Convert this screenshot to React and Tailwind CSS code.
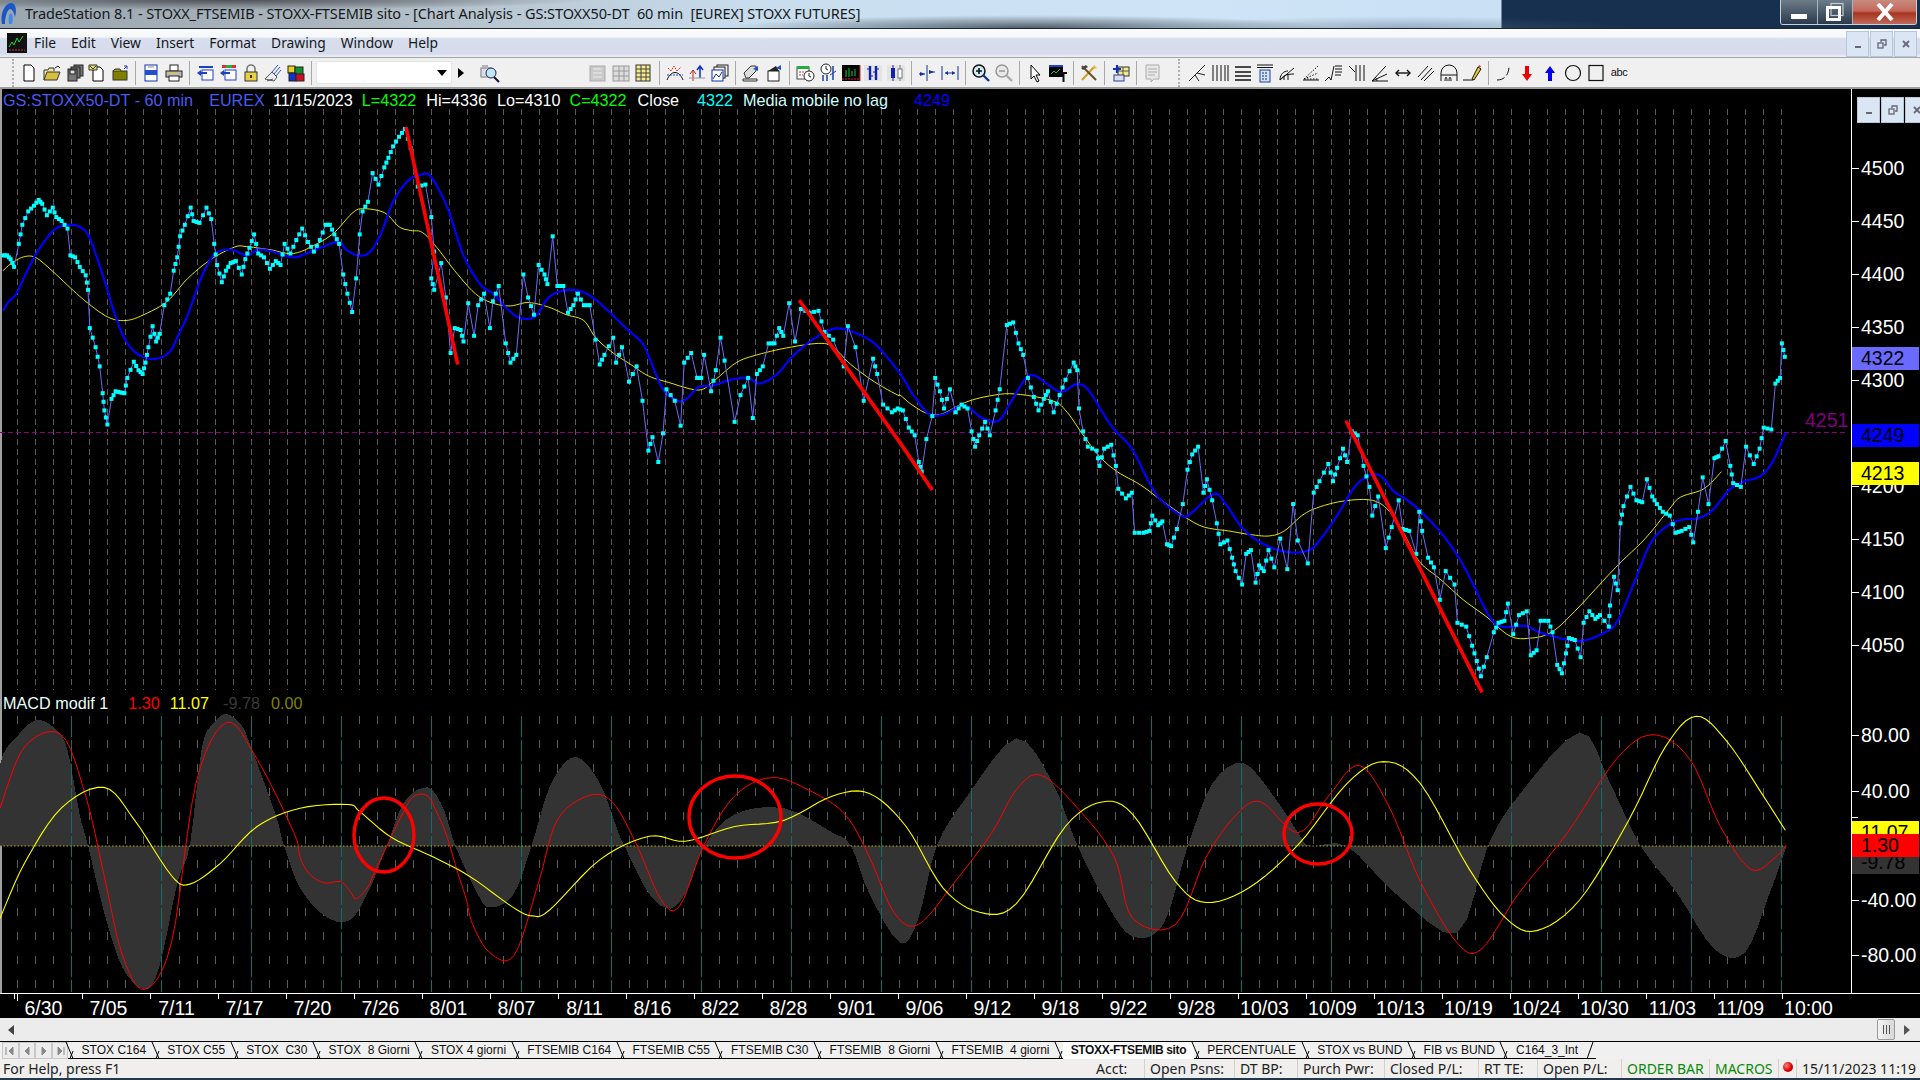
import React from "react";

const sx = 1 / 1.7043, sy = 1 / 2.6133;
const A = (a) => a.map(([x, y]) => [+(x * sx).toFixed(1), +(110 + y * sy).toFixed(1)]);
const B = (a) => a.map(([x, y]) => [+(900 + x * sx).toFixed(1), +(110 + y * sy).toFixed(1)]);
const D = (a) => a.map(([x, y]) => [+(x * 1.2245).toFixed(1), +(y * 1.2245).toFixed(1)]);
const P = (a) => a.map((p) => p.join(",")).join(" ");
// Catmull-Rom resampling, so that the digitised indicator curves stay round
const smooth = (a, n = 6) => {
  const out = [];
  for (let i = 0; i < a.length - 1; i++) {
    const p0 = a[i - 1] || a[i], p1 = a[i], p2 = a[i + 1], p3 = a[i + 2] || a[i + 1];
    for (let k = 0; k < n; k++) {
      const t = k / n, t2 = t * t, t3 = t2 * t;
      const f = (j) => 0.5 * (2 * p1[j] + (p2[j] - p0[j]) * t + (2 * p0[j] - 5 * p1[j] + 4 * p2[j] - p3[j]) * t2 + (3 * p1[j] - p0[j] - 3 * p2[j] + p3[j]) * t3);
      out.push([+f(0).toFixed(1), +f(1).toFixed(1)]);
    }
  }
  out.push(a[a.length - 1]);
  return out;
};

const price = [
  ...A([[5,380],[12,380],[18,390],[24,410],[32,350],[38,300],[48,265],[58,250],[66,235],[72,245],[80,275],[90,255],[96,280],[105,290],[115,310],[120,380],[128,385],[136,410],[146,432],[150,470],[153,570],[163,620],[170,670],[175,740],[178,785],[183,822],[190,755],[197,735],[205,738],[212,740],[217,700],[228,658],[236,680],[243,690],[248,660],[253,620],[260,565],[266,605],[272,585],[280,510],[290,480],[296,420],[302,385],[307,330],[315,300],[325,255],[330,290],[340,295],[352,255],[360,285],[365,350],[370,405],[378,450],[385,420],[393,400],[402,395],[412,430],[418,390],[425,360],[433,325],[440,375],[450,385],[460,415],[470,395],[478,405],[485,350],[495,375],[505,340],[515,310],[525,345],[535,370],[545,340],[555,300],[562,300],[570,325],[578,350],[585,430],[592,480],[600,528],[607,440],[613,325],[618,265],[627,240],[635,165],[645,195],[655,150],[662,125],[670,95],[680,70],[690,50],[700,100],[712,200],[725,195],[735,280],[740,370],[735,440],[740,470],[752,400],[760,490],[768,635],[775,570],[785,575],[790,605],[798,505],[808,590],[815,510],[825,480],[835,570],[840,500],[850,460],[862,610],[870,660],[880,640],[892,430],[900,490],[910,535],[918,405],[928,430],[933,455],[942,330],[950,460],[960,460],[968,530],[977,510],[985,480],[995,510],[1005,510],[1015,600],[1022,665],[1030,640],[1045,595],[1050,660],[1060,620],[1072,710],[1085,670],[1095,760],[1105,890],[1112,855],[1122,920],[1130,845],[1136,730],[1150,760],[1160,825],[1166,660],[1178,635],[1188,700],[1195,700],[1200,640],[1212,735],[1220,680],[1228,595],[1235,655],[1252,815],[1262,745],[1275,700],[1283,805],[1290,690],[1300,670],[1310,610],[1320,610],[1328,570],[1335,590],[1345,505],[1355,605],[1365,520],[1380,530],[1395,525],[1405,580],[1420,600],[1438,670],[1445,565],[1458,620],[1472,760],[1488,650],[1495,690],[1505,770],[1520,790],[1530,780]]),
  ...B([[5,785],[15,830],[25,850],[32,920],[37,945],[45,860],[55,800],[60,700],[68,735],[75,780],[85,730],[95,790],[105,770],[115,780],[122,840],[128,880],[135,850],[145,815],[153,850],[163,785],[170,730],[182,562],[193,555],[202,610],[210,640],[218,700],[228,750],[236,785],[245,755],[252,735],[262,790],[272,745],[282,705],[296,660],[302,680],[305,780],[312,840],[320,880],[335,890],[340,930],[348,885],[360,875],[368,930],[372,990],[385,1015],[395,1000],[400,1105],[415,1105],[425,1100],[430,1060],[440,1085],[447,1075],[455,1135],[462,1140],[472,1095],[482,1030],[490,940],[498,900],[508,880],[517,1000],[523,965],[532,1020],[540,1080],[546,1135],[558,1125],[566,1170],[572,1205],[583,1240],[590,1160],[598,1150],[606,1235],[612,1190],[620,1205],[628,1150],[638,1195],[648,1120],[660,1200],[670,1030],[678,1125],[695,1185],[705,1000],[715,970],[730,925],[738,970],[745,935],[755,885],[762,920],[770,840],[780,850],[790,930],[800,985],[805,1060],[815,1010],[828,1145],[838,1090],[850,1020],[857,1095],[868,1100],[880,1160],[885,1050],[890,1100],[900,1170],[910,1195],[920,1280],[930,1205],[945,1240],[950,1340],[965,1350],[975,1400],[983,1440],[990,1480],[1000,1430],[1012,1365],[1020,1340],[1030,1335],[1036,1290],[1045,1370],[1055,1320],[1068,1310],[1075,1425],[1085,1412],[1092,1335],[1105,1335],[1112,1365],[1120,1450],[1128,1472],[1135,1420],[1140,1380],[1150,1385],[1160,1430],[1165,1340],[1175,1310],[1185,1330],[1193,1320],[1208,1350],[1210,1295],[1217,1220],[1223,1255],[1228,1080],[1233,1035],[1245,985],[1255,1020],[1265,1025],[1273,965],[1282,1010],[1290,1030],[1300,1050],[1312,1060],[1322,1105],[1332,1100],[1345,1090],[1352,1130],[1360,1050],[1368,960],[1378,1030],[1388,910],[1395,905],[1407,865],[1415,930],[1420,975],[1433,985],[1442,880],[1455,925],[1465,885],[1472,830],[1485,835],[1492,715],[1500,700],[1503,610],[1508,645]]),
];
const dots = [];
price.forEach((p, i) => {
  dots.push(p);
  const n = price[i + 1];
  if (n && Math.hypot(n[0] - p[0], n[1] - p[1]) < 22) dots.push([(p[0] + n[0]) / 2, (p[1] + n[1]) / 2]);
});

const blue = smooth([
  ...A([[5,525],[15,500],[28,480],[45,425],[60,380],[75,345],[95,310],[118,300],[135,305],[150,325],[165,385],[180,455],[195,530],[210,590],[228,630],[250,648],[272,648],[290,630],[305,585],[320,535],[340,450],[355,400],[370,372],[395,365],[420,380],[440,365],[465,370],[500,385],[530,370],[575,345],[590,365],[610,380],[630,372],[650,320],[670,240],[695,185],[715,170],[730,168],[745,200],[765,265],[790,380],[818,455],[840,480],[865,520],[885,543],[912,540],[935,490],[960,472],[985,472],[1010,490],[1040,530],[1070,575],[1095,610],[1110,660],[1130,730],[1155,760],[1170,755],[1190,725],[1215,720],[1245,705],[1275,700],[1295,715],[1325,690],[1350,645],[1385,600],[1420,572],[1450,578],[1490,610],[1530,680]]),
  ...B([[5,700],[25,750],[50,795],[75,795],[100,775],[115,775],[140,805],[168,812],[190,760],[215,700],[230,695],[250,715],[275,737],[300,717],[320,730],[345,790],[365,835],[395,885],[425,975],[445,1020],[480,1060],[495,1055],[535,1003],[555,1030],[585,1095],[620,1135],[660,1155],[695,1152],[715,1125],[745,1060],[775,985],[800,955],[820,957],[840,995],[865,1020],[895,1060],[930,1120],[960,1190],[985,1265],[1005,1325],[1025,1350],[1065,1348],[1090,1365],[1130,1382],[1165,1387],[1205,1362],[1225,1330],[1250,1240],[1280,1130],[1310,1085],[1335,1070],[1360,1067],[1385,1045],[1415,990],[1440,970],[1465,958],[1485,925],[1505,860],[1510,843]]),
]);
const yellow = smooth([
  ...A([[5,420],[20,400],[40,384],[60,385],[85,415],[120,465],[150,505],[185,542],[215,550],[245,535],[285,500],[320,440],[360,390],[400,358],[420,357],[460,365],[500,375],[540,350],[570,320],[600,270],[618,258],[655,268],[680,305],[700,315],[720,320],[745,360],[775,420],[810,480],[840,505],[870,512],[900,503],[935,515],[965,535],[995,550],[1015,595],[1045,635],[1075,665],[1105,695],[1140,712],[1190,732],[1215,710],[1255,660],[1290,640],[1340,622],[1395,610],[1420,620],[1450,665],[1490,710],[1530,745]]),
  ...B([[0,745],[20,770],[45,792],[70,795],[110,765],[150,748],[195,742],[260,760],[285,790],[310,845],[340,905],[370,945],[410,980],[450,1025],[510,1085],[560,1100],[600,1110],[630,1113],[655,1100],[685,1060],[710,1040],[755,1022],[805,1020],[835,1050],[860,1110],[885,1180],[920,1225],[960,1280],[1000,1325],[1040,1375],[1075,1380],[1110,1365],[1150,1310],[1220,1195],[1270,1120],[1310,1045],[1330,1012],[1370,990],[1400,945]]),
]);
const redLines = [
  A([[692,45],[780,665]]),
  A([[1362,497],[1534,870]]).concat(B([[55,993]])),
  B([[760,812],[992,1522]]),
];

const hist = smooth(D([[0,691],[0,625],[15,600],[30,588],[45,595],[55,612],[65,665],[72,691],[85,745],[100,790],[118,808],[130,790],[145,720],[155,691],[165,610],[175,590],[185,583],[197,592],[205,610],[225,665],[232,691],[245,725],[265,748],[285,752],[300,730],[316,691],[330,655],[349,643],[362,660],[372,691],[390,730],[400,741],[419,731],[434,691],[450,640],[470,618],[490,640],[505,680],[510,691],[530,730],[548,742],[562,725],[575,691],[600,665],[640,660],[680,680],[695,691],[710,730],[735,770],[750,750],[765,691],[790,650],[830,603],[860,640],[880,691],[905,740],[925,765],[950,755],[970,691],[990,640],[1015,623],[1040,650],[1060,680],[1070,691],[1100,691],[1140,730],[1190,762],[1215,691],[1240,650],[1290,598],[1315,640],[1340,691],[1370,730],[1400,775],[1425,778],[1445,730],[1459,691]]), 4);
const macdRed = smooth(D([[0,660],[20,610],[50,600],[70,650],[85,715],[100,780],[118,808],[140,770],[160,640],[185,590],[210,620],[240,680],[245,700],[253,714],[265,721],[278,720],[286,728],[291,734],[300,725],[306,712],[316,691],[327,668],[337,651],[349,650],[357,664],[365,683],[373,710],[381,735],[386,755],[400,778],[420,780],[440,720],[455,670],[480,650],[500,655],[520,690],[540,735],[555,740],[575,690],[600,650],[630,635],[660,645],[690,665],[710,700],[730,745],[750,755],[780,720],[810,680],[830,645],[850,633],[880,660],[910,700],[925,750],[960,755],[985,700],[1010,665],[1030,655],[1060,680],[1085,650],[1110,625],[1135,660],[1160,720],[1190,770],[1210,775],[1240,730],[1280,680],[1320,620],[1350,600],[1380,620],[1405,675],[1430,710],[1450,700],[1459,690]]));
const macdYellow = smooth(D([[0,750],[20,705],[50,660],[85,643],[110,670],[140,715],[155,722],[180,705],[210,675],[245,660],[284,657],[294,663],[320,684],[354,700],[384,716],[419,741],[435,748],[449,743],[490,702],[530,683],[560,687],[600,675],[640,670],[680,650],[710,648],[740,675],[770,725],[800,745],[830,738],[870,675],[900,655],[925,665],[960,720],[985,737],[1020,725],[1060,690],[1100,640],[1130,622],[1160,640],[1200,710],[1230,750],[1255,760],[1290,735],[1330,670],[1360,610],[1385,585],[1410,605],[1440,650],[1458,678]]));

const grayX = Array.from({ length: 99 }, (_, k) => 17 + 18 * k).filter((x) => x <= 1781);
const tealX = Array.from({ length: 20 }, (_, k) => 71 + 90 * k);

const dates = ["6/30","7/05","7/11","7/17","7/20","7/26","8/01","8/07","8/11","8/16","8/22","8/28","9/01","9/06","9/12","9/18","9/22","9/28","10/03","10/09","10/13","10/19","10/24","10/30","11/03","11/09","10:00"];
const priceLabels = [4500,4450,4400,4350,4300,4200,4150,4100,4050];
const py = (p) => 380 + (4300 - p) * 1.06;

const S = ({ children, w = 20 }) => (
  <svg width={w} height="20" viewBox="0 0 20 20" fill="none">{children}</svg>
);
const Ico = ({ children }) => (
  <div className="w-[22.7px] h-[22px] flex items-center justify-center shrink-0">{children}</div>
);
const Sep = () => (
  <div className="w-[8.6px] h-[24px] flex justify-center shrink-0"><div className="w-px h-full bg-[#a8a8a8]" /></div>
);
const Grip = () => <div className="w-px h-[28px] border-l-2 border-dotted border-[#b0b0b0] shrink-0" />;

const ic = {
  new: <path d="M5 2h7l3 3v13H5z" fill="#fff" stroke="#000" />,
  open: <g><path d="M2 17V7h4l1-2h5v3" fill="#f4e9a0" stroke="#333"/><path d="M2 17l3-8h13l-3 8z" fill="#d8c040" stroke="#333"/><path d="M13 5l3-2 2 2" stroke="#222"/></g>,
  saveall: <g fill="#777" stroke="#222"><rect x="9" y="2" width="9" height="11"/><rect x="6" y="4" width="9" height="11"/><rect x="3" y="6" width="9" height="12"/><rect x="5" y="7" width="5" height="4" fill="#ddd"/></g>,
  note: <g><path d="M6 4h7l3 3v11H6z" fill="#fff" stroke="#000"/><path d="M2 2h8v5H2z" fill="#e8e060" stroke="#333"/><path d="M3 3l3 3 3-3" stroke="#333"/></g>,
  box: <g><rect x="3" y="8" width="14" height="9" fill="#808000" stroke="#333"/><path d="M3 8l2-2h5l1 2" fill="#9a9a20" stroke="#333"/><path d="M14 6l3-3m0 0v3m0-3h-3" stroke="#2040b0"/></g>,
  preview: <g><rect x="4" y="2" width="12" height="16" fill="#fff" stroke="#1030a0"/><rect x="4" y="7" width="12" height="5" fill="#2050d0"/><path d="M7 4h6" stroke="#888"/></g>,
  print: <g><rect x="6" y="2" width="8" height="6" fill="#fff" stroke="#222"/><rect x="2" y="8" width="16" height="6" fill="#bbb" stroke="#222"/><rect x="5" y="13" width="10" height="5" fill="#fff" stroke="#222"/><path d="M5 10h9" stroke="#f0c020"/></g>,
  win1: <g><rect x="4" y="3" width="14" height="2" fill="#2040c0"/><rect x="7" y="7" width="11" height="10" fill="#fff" stroke="#2040c0"/><path d="M2 10l4-3v2h6v2H6v2z" fill="#2040c0"/></g>,
  win2: <g><rect x="4" y="2" width="14" height="3" fill="#e03030"/><rect x="8" y="2" width="6" height="3" fill="#20b040"/><rect x="7" y="7" width="11" height="10" fill="#fff" stroke="#2040c0"/><path d="M2 10l4-3v2h6v2H6v2z" fill="#2040c0"/></g>,
  lock: <g><path d="M6 9V6a4 4 0 018 0v3" stroke="#777" strokeWidth="1.6"/><rect x="4" y="9" width="12" height="9" fill="#e8d040" stroke="#333"/><rect x="9" y="12" width="2" height="3" fill="#333"/></g>,
  sat: <g><path d="M2 16l7-7 5 5-3 4z" fill="#eee" stroke="#555"/><path d="M9 9l6-7M11 11l6-7M13 13l5-6" stroke="#3050c0"/><path d="M4 18l6-2" stroke="#555"/></g>,
  cubes: <g><rect x="2" y="3" width="7" height="7" fill="#e8d020" stroke="#222"/><rect x="9" y="4" width="8" height="8" fill="#109030" stroke="#222"/><rect x="3" y="10" width="7" height="8" fill="#1030d0" stroke="#222"/><rect x="10" y="11" width="8" height="7" fill="#d01020" stroke="#222"/></g>,
  mag: <g><rect x="1" y="5" width="10" height="9" fill="#dde" stroke="#777"/><path d="M2 3h6" stroke="#777"/><circle cx="11" cy="10" r="5" fill="#bfe8f4" stroke="#225"/><path d="M14 14l5 5" stroke="#113" strokeWidth="2"/></g>,
  dis1: <g fill="#aaa"><rect x="2" y="3" width="15" height="15" fill="#c9c9c9" stroke="#aaa"/><path d="M5 6h9M5 10h9M5 14h9" stroke="#eee"/></g>,
  dis2: <g><rect x="2" y="3" width="16" height="15" fill="#ddd" stroke="#999"/><path d="M2 8h16M2 13h16M8 3v15M13 3v15" stroke="#999"/></g>,
  table: <g><rect x="3" y="2" width="14" height="16" fill="#f5e98a" stroke="#333"/><path d="M3 6h14M3 10h14M3 14h14M8 2v16M13 2v16" stroke="#444"/></g>,
  wave: <g><path d="M2 17c4-10 12-10 16 0" stroke="#111"/><path d="M3 5l3 3 3-5 3 5 4-4" stroke="#d03030" strokeDasharray="2 1"/><path d="M2 12h16" stroke="#2040c0" strokeDasharray="2 1"/></g>,
  arrows: <g><path d="M6 18V8M3 11l3-4 3 4" stroke="#c02020"/><path d="M13 4v11M10 7l3-4 3 4" stroke="#1030c0" strokeWidth="1.5"/><path d="M2 15h16" stroke="#999"/></g>,
  charts: <g><rect x="7" y="2" width="11" height="11" fill="#eee" stroke="#222"/><rect x="4" y="4" width="11" height="11" fill="#eee" stroke="#222"/><rect x="2" y="7" width="11" height="11" fill="#fff" stroke="#1030a0"/><path d="M3 16l3-5 3 3 3-5" stroke="#1030a0"/></g>,
  doc1: <g><path d="M3 10l7-7h5v5l-7 7H5z" fill="#ddd" stroke="#333"/><path d="M2 16h14v2H2z" fill="#eee" stroke="#333"/><path d="M12 6l5-3v5z" fill="#2050c0"/></g>,
  doc2: <g><rect x="4" y="8" width="11" height="10" fill="#fff" stroke="#222"/><path d="M4 8l8-5 3 5z" fill="#222"/><path d="M12 5l5-3v5z" fill="#2050c0"/></g>,
  cal: <g><rect x="2" y="4" width="12" height="12" fill="#fff" stroke="#444"/><rect x="2" y="3" width="12" height="3" fill="#20b040"/><path d="M4 9h7M4 12h4" stroke="#c03030" strokeDasharray="2 1"/><circle cx="14" cy="13" r="5" fill="#fff" stroke="#222"/><path d="M14 10v3l2 1" stroke="#222"/></g>,
  clock: <g><circle cx="8" cy="6" r="5" fill="#fff" stroke="#222"/><path d="M8 3v3l2 1" stroke="#222"/><path d="M5 12v6M9 12v6M15 3v14" stroke="#2040a0" strokeWidth="1.5"/><path d="M12 12l6-4" stroke="#2040a0"/></g>,
  black: <g><rect x="1" y="2" width="18" height="16" fill="#000"/><path d="M5 7v7M8 5v9M11 8v5M14 6v7" stroke="#10d030"/><path d="M1 16h18" stroke="#e02020" strokeDasharray="2 1"/><path d="M19 2v16" stroke="#e02020"/></g>,
  bars1: <g><rect x="1" y="2" width="18" height="16" fill="#e4e4e4"/><path d="M7 3v14M13 3v14" stroke="#1020b0" strokeWidth="2.4"/><path d="M4 6h3M7 13h3M10 9h3M13 6h3" stroke="#1020b0"/></g>,
  bars2: <g><rect x="1" y="2" width="18" height="16" fill="#e4e4e4"/><rect x="5" y="5" width="4" height="10" fill="#1020b0"/><path d="M7 2v16" stroke="#1020b0"/><path d="M14 2v16" stroke="#777"/><rect x="12" y="6" width="4" height="9" fill="#fff" stroke="#777"/></g>,
  comp: <g stroke="#1030a0"><path d="M10 2v16"/><path d="M3 9l5 2-5 2zM17 9l-5-2v4z" fill="#1030a0" stroke="none"/><path d="M2 11h6M12 9h6"/></g>,
  exp: <g stroke="#1030a0"><path d="M2 3v14M18 3v14" /><path d="M5 10h10"/><path d="M8 8l-3 2 3 2zM12 8l3 2-3 2z" fill="#1030a0" stroke="none"/></g>,
  zin: <g><circle cx="8" cy="8" r="6" fill="#cfeef6" stroke="#111" strokeWidth="1.5"/><path d="M5 8h6M8 5v6" stroke="#111" strokeWidth="1.6"/><path d="M12 12l6 6" stroke="#123a8a" strokeWidth="2.4"/></g>,
  zout: <g><circle cx="8" cy="8" r="6" fill="#e8e8e8" stroke="#999" strokeWidth="1.5"/><path d="M5 8h6" stroke="#999" strokeWidth="1.6"/><path d="M12 12l6 6" stroke="#aaa" strokeWidth="2.4"/></g>,
  cursor: <path d="M6 2v14l3-3 3 6 2-1-3-6h4z" fill="#fff" stroke="#000" />,
  textc: <g><rect x="1" y="2" width="14" height="12" fill="#000"/><rect x="1" y="2" width="14" height="2" fill="#2040d0"/><path d="M3 11l3-3 2 2 4-4" stroke="#10d030"/><path d="M12 9h7v2h-2.5v8h-2v-8H12z" fill="#111"/></g>,
  tools: <g><path d="M3 17L15 4" stroke="#d0a020" strokeWidth="2"/><path d="M3 3l14 14" stroke="#6a5020" strokeWidth="2"/><path d="M2 5l5-3 2 2-5 3z" fill="#444"/><path d="M15 2l3 3-3 1-1-2z" fill="#e0c040"/></g>,
  plus: <g><rect x="7" y="4" width="11" height="9" fill="#f5e98a" stroke="#333"/><path d="M7 8h11M12 4v9" stroke="#555"/><path d="M6 2v8M2 6h8" stroke="#1030c0" strokeWidth="2.2"/><rect x="3" y="12" width="10" height="6" fill="#dde" stroke="#2040a0"/></g>,
  chat: <g><path d="M4 2h13v14h-5l-3 3v-3H4z" fill="#e8e8e8" stroke="#aaa"/><path d="M6 6h9M6 9h9M6 12h7" stroke="#aaa"/></g>,
  fork: <g stroke="#222"><path d="M2 18L18 2"/><path d="M10 10l8 2M8 12l4 6"/></g>,
  vlines: <g stroke="#111"><path d="M3 2v16M7 2v16M11 2v16M15 2v16M18 2v16"/></g>,
  hlines: <g stroke="#111" strokeWidth="1.3"><path d="M2 4h16M2 9h16M2 13h16M2 17h16"/></g>,
  calc: <g><path d="M2 2h16M2 4.5h16" stroke="#111"/><rect x="5" y="7" width="10" height="12" fill="#cfe4f6" stroke="#2040a0"/><path d="M7 10h6M7 13h6M7 16h6" stroke="#1a2a70" strokeDasharray="2 1"/></g>,
  fan: <g stroke="#111"><path d="M2 17l14-12M2 17c0-6 4-9 8-9M2 17c3-4 6-6 14-6M6 17v-4M10 17v-6"/></g>,
  dotfan: <g stroke="#111"><path d="M2 17h16" /><path d="M3 16L17 3M3 16l14-6M3 16h14" strokeDasharray="1.5 1.5"/></g>,
  steps: <g stroke="#111"><path d="M1 18l4-4 2 3 3-14"/><path d="M11 3h7M11 6h7M11 9h7M11 12h6" strokeWidth="1.2"/></g>,
  fanv: <g stroke="#111"><path d="M2 3l6 6M9 2v16M13 2v16M17 2v16"/></g>,
  angle: <g stroke="#111"><path d="M2 18h16M2 18L16 3M2 18l15-7" /><path d="M7 18c0-2-1-3-2-4" /></g>,
  hdbl: <g stroke="#111" strokeWidth="1.4"><path d="M3 10h14"/><path d="M6 7l-3 3 3 3M14 7l3 3-3 3"/></g>,
  para: <g stroke="#111"><path d="M2 14L12 3M5 17L16 5M8 18L18 8"/></g>,
  dome: <g stroke="#111"><path d="M2 18V10a8 8 0 0116 0v8"/><path d="M2 12h16"/><path d="M6 18c0-5 2-5 2 0M10 18c0-5 2-5 2 0" /></g>,
  pencil: <g><path d="M1 17h10" stroke="#111"/><path d="M10 16l6-12 3 2-7 11z" fill="#e8d020" stroke="#111"/><path d="M16 4l1-2 2 1-1 2z" fill="#d04040"/></g>,
  curve: <path d="M3 17c8 0 12-6 12-14" stroke="#111" strokeDasharray="8 3" />,
  rdown: <path d="M8 3h4v8h3l-5 7-5-7h3z" fill="#f00000" />,
  bup: <path d="M8 18h4v-8h3l-5-7-5 7h3z" fill="#0000f0" />,
  circ: <circle cx="10" cy="10" r="7.5" stroke="#111" strokeWidth="1.2" />,
  rect: <rect x="3" y="2.5" width="14" height="15" stroke="#111" strokeWidth="1.2" />,
};
const Icons = ({ names }) => names.map((n) => <Ico key={n}><S>{ic[n]}</S></Ico>);

const tabs = ["STOX C164","STOX C55","STOX  C30","STOX  8 Giorni","STOX 4 giorni","FTSEMIB C164","FTSEMIB C55","FTSEMIB C30","FTSEMIB  8 Giorni","FTSEMIB  4 giorni","STOXX-FTSEMIB sito","PERCENTUALE","STOX vs BUND","FIB vs BUND","C164_3_Int"];

const Lam = () => (
  <svg width="14" height="17" viewBox="0 0 14 17" className="shrink-0 -mx-[4px]" fill="none" stroke="#000">
    <path d="M2 0l7 16.5M6 16.5L9 9" />
  </svg>
);

const MdiBtn = ({ children }) => (
  <div className="w-[23px] h-[26px] bg-[#dbe6f4] border border-[#b7c7d8] flex items-center justify-center">{children}</div>
);
const MdiGlyphs = () => (
  <>
    <MdiBtn><svg width="10" height="10" viewBox="0 0 10 10"><rect x="2" y="7" width="6" height="2" fill="#667"/></svg></MdiBtn>
    <MdiBtn><svg width="10" height="10" viewBox="0 0 10 10" fill="none" stroke="#667" strokeWidth="1.3"><rect x="1" y="4" width="5" height="5"/><path d="M4 3V1h5v5H7"/></svg></MdiBtn>
    <MdiBtn><svg width="10" height="10" viewBox="0 0 10 10" fill="none" stroke="#667" strokeWidth="1.8"><path d="M2 2l6 6M8 2l-6 6"/></svg></MdiBtn>
  </>
);

const AxisLabel = ({ y, children }) => (
  <div className="absolute left-0 w-[69px] h-[22px] pl-[9px] text-white text-[19.5px] leading-[22px]" style={{ top: y - 11 - 89 }}>{children}</div>
);
const Tag = ({ top, h = 23, bg, children, lh }) => (
  <div className={`absolute left-0 w-[67px] pl-[9px] text-black text-[19.5px] ${bg}`} style={{ top: top - 89, height: h, lineHeight: `${lh ?? h}px` }}>{children}</div>
);

const StatusCell = ({ w, cls = "text-[#222]", children }) => (
  <div className={`h-full shrink-0 border-l border-[#d4d0cc] pl-[5px] whitespace-pre overflow-hidden ${w} ${cls}`}>{children}</div>
);

export default function App() {
  return (
    <div className="w-[1920px] h-[1080px] overflow-hidden flex flex-col bg-black font-['Liberation_Sans',Arial,sans-serif]">
      {/* title bar */}
      <div className="h-[29px] shrink-0 flex items-start border-b border-[#1b2830] [background:radial-gradient(ellipse_300px_13px_at_1030px_28px,rgba(40,50,60,.75),transparent),radial-gradient(ellipse_230px_12px_at_1400px_28px,rgba(90,110,130,.45),transparent),radial-gradient(ellipse_360px_10px_at_230px_0px,rgba(40,40,45,.7),transparent),linear-gradient(90deg,#9aa6b0_0,#a9b3bb_300px,#b9c7d2_500px,#c8ddee_760px,#cfe4f6_1200px,#c9e0f5_1500px,#c9e0f5_1501px,#17304f_1502px,#17304f_1920px)]">
        <svg width="18" height="24" viewBox="0 0 18 24" className="mt-[2px] shrink-0">
          <path d="M2 22C0 12 4 2 11 1c5 0 6 8 4 14-1-5-3-8-5-8-3 1-5 8-5 15z" fill="#1a56c8" />
          <path d="M9 22c-1-6 0-10 2-11 2 2 2 7 1 11z" fill="#3d8ae8" />
        </svg>
        <div className="ml-[7px] mt-[3px] text-[14.5px] leading-[20px] text-[#15191c] whitespace-pre font-['Noto_Sans',sans-serif] tracking-[-0.08px]">TradeStation 8.1 - STOXX_FTSEMIB - STOXX-FTSEMIB sito - [Chart Analysis - GS:STOXX50-DT  60 min  [EUREX] STOXX FUTURES]</div>
        <div className="ml-auto mr-[3px] flex h-[25px] border border-t-0 border-[#c8d0d8] rounded-b-[3px] overflow-hidden shrink-0">
          <div className="w-[37px] flex items-end justify-center pb-[5px] bg-[linear-gradient(#6d7b88,#2a3a4c)] border-r border-[#aab4be]"><div className="w-[16px] h-[5px] bg-white" /></div>
          <div className="w-[35px] flex items-center justify-center bg-[linear-gradient(#6d7b88,#2a3a4c)] border-r border-[#aab4be]">
            <svg width="20" height="20" viewBox="0 0 20 20" fill="none" stroke="#fff"><rect x="6" y="1.5" width="12" height="12" strokeWidth="1.2" stroke="#c4ccd4"/><rect x="2.5" y="5.5" width="12" height="12" strokeWidth="3"/></svg>
          </div>
          <div className="w-[63px] flex items-center justify-center bg-[linear-gradient(#c98a7e_0,#c2695a_45%,#a83420_55%,#c06a58_100%)]">
            <svg width="20" height="18" viewBox="0 0 20 18" stroke="#fff" strokeWidth="4"><path d="M3 1l14 16M17 1L3 17"/></svg>
          </div>
        </div>
      </div>

      {/* menu bar */}
      <div className="h-[29px] shrink-0 flex items-center border-b border-[#a6a6a6] bg-[linear-gradient(#fbfbfc_0,#f6f7fa_28%,#d8deee_35%,#d6dcec_88%,#eef0f5_100%)] text-[13.8px] font-['Noto_Sans',sans-serif] text-[#15191c]">
        <svg width="20" height="20" viewBox="0 0 20 20" className="ml-[7px] shrink-0">
          <rect width="20" height="20" fill="#111" />
          <path d="M2 14l3-5 2 3 3-7 2 4 4-6" stroke="#20d040" fill="none" />
          <path d="M2 17h16" stroke="#d03030" strokeDasharray="2 1" />
        </svg>
        <div className="ml-[7px] flex gap-[15px]">
          {["File","Edit","View","Insert","Format","Drawing","Window","Help"].map((m) => <span key={m}>{m}</span>)}
        </div>
        <div className="ml-auto flex gap-px mr-[3px] mt-[1px]"><MdiGlyphs /></div>
      </div>

      {/* toolbar */}
      <div className="h-[31px] shrink-0 flex items-center bg-[#f0f0f0] border-b-2 border-[#9d9d9d]">
        <div className="ml-[12px]"><Grip /></div>
        <div className="ml-[4px] flex items-center">
          <Icons names={["new","open","saveall","note","box"]} /><Sep />
          <Icons names={["preview","print"]} /><Sep />
          <Icons names={["win1","win2","lock","sat","cubes"]} /><Sep />
        </div>
        <div className="w-[136px] h-[23px] bg-white rounded-[2px] border border-[#e4e4e4] flex items-center justify-end pr-[4px] shrink-0">
          <svg width="10" height="6" viewBox="0 0 10 6"><path d="M0 0h10L5 6z" fill="#000" /></svg>
        </div>
        <svg width="6" height="10" viewBox="0 0 6 10" className="ml-[6px] shrink-0"><path d="M0 0l6 5-6 5z" fill="#000" /></svg>
        <div className="ml-[15px]"><Ico><S>{ic.mag}</S></Ico></div>
        <div className="ml-[85px] flex items-center">
          <Icons names={["dis1","dis2","table"]} /><Sep />
          <Icons names={["wave","arrows","charts"]} /><Sep />
          <Icons names={["doc1","doc2"]} /><Sep />
          <Icons names={["cal","clock","black","bars1","bars2"]} /><Sep />
          <Icons names={["comp","exp"]} /><Sep />
          <Icons names={["zin","zout"]} /><Sep />
          <Icons names={["cursor","textc"]} /><Sep />
          <Icons names={["tools"]} /><Sep />
          <Icons names={["plus"]} /><Sep />
          <Icons names={["chat"]} />
        </div>
        <div className="ml-[15px]"><Grip /></div>
        <div className="ml-[5px] flex items-center gap-[0.3px]">
          <Icons names={["fork","vlines","hlines","calc","fan","dotfan","steps","fanv","angle","hdbl","para","dome","pencil"]} /><Sep />
          <Icons names={["curve","rdown","bup","circ","rect"]} />
          <Ico><span className="text-[11px] tracking-[-0.3px] text-[#111]">abc</span></Ico>
        </div>
      </div>

      {/* chart */}
      <div className="h-[904px] shrink-0 flex bg-black">
        <div className="relative w-[1851px] shrink-0 border-l-2 border-[#a0a0a0]">
          <svg width="1851" height="904" viewBox="0 89 1851 904" className="absolute -left-[2px] top-0" fill="none">
            {grayX.map((x) => <line key={x} x1={x + 0.5} x2={x + 0.5} y1="109" y2="690" stroke="#5a5a5a" strokeDasharray="6 4" />)}
            {grayX.filter((x) => !tealX.includes(x)).map((x) => <line key={x} x1={x + 0.5} x2={x + 0.5} y1="716" y2="992" stroke="#5c5c5c" strokeDasharray="8 16" />)}
            <polygon points={P(hist)} fill="#333333" shapeRendering="crispEdges" />
            {tealX.map((x) => <line key={x} x1={x + 0.5} x2={x + 0.5} y1="716" y2="992" stroke="#126a6a" strokeDasharray="21 3" />)}
            <line x1="0" x2="1785" y1="846" y2="846" stroke="#b0b000" strokeDasharray="1.5 2" />
            <line x1="0" x2="1848" y1="432.5" y2="432.5" stroke="#800080" strokeDasharray="5 3" />

            <polyline points={P(yellow)} stroke="#ffff00" strokeWidth="0.9" />
            <polyline points={P(blue)} stroke="#0000ff" strokeWidth="2.2" />
            <polyline points={P(price)} stroke="#6b6bf5" strokeWidth="1" />
            {dots.map(([x, y], i) => <rect key={i} x={x - 2} y={y - 2} width="4" height="4" fill="#00ffff" />)}
            {redLines.map((l, i) => <polyline key={i} points={P(l)} stroke="#ff0000" strokeWidth="3.6" />)}

            <polyline points={P(macdRed)} stroke="#ff0000" strokeWidth="1" />
            <polyline points={P(macdYellow)} stroke="#ffff00" strokeWidth="1.1" />
            <ellipse cx="384" cy="835" rx="30" ry="37" stroke="#ff0000" strokeWidth="3.4" />
            <ellipse cx="735" cy="817" rx="46" ry="41" stroke="#ff0000" strokeWidth="3.4" />
            <ellipse cx="1318" cy="834" rx="34" ry="30" stroke="#ff0000" strokeWidth="3.4" />
          </svg>

          <div className="absolute -left-[2px] top-[2px] flex text-[16.2px] leading-[18px] whitespace-pre pl-[3px]">
            <span className="text-[#4a5af0]">GS:STOXX50-DT - 60 min</span>
            <span className="ml-[16px] text-[#4a5af0]">EUREX</span>
            <span className="ml-[8px] text-white">11/15/2023</span>
            <span className="ml-[9px] text-[#00ff00]">L=4322</span>
            <span className="ml-[10px] text-white">Hi=4336</span>
            <span className="ml-[10px] text-white">Lo=4310</span>
            <span className="ml-[9px] text-[#00ff00]">C=4322</span>
            <span className="ml-[11px] text-white">Close</span>
            <span className="ml-[18px] text-[#00ffff]">4322</span>
            <span className="ml-[10px] text-[#ccffff]">Media mobile no lag</span>
            <span className="ml-[26px] text-[#0000ff]">4249</span>
          </div>

          <div className="absolute left-[1803px] top-[320px] text-[#800080] text-[19.5px] leading-[22px]">4251</div>

          <div className="absolute -left-[2px] top-[605px] text-[16.2px] leading-[18px] whitespace-pre pl-[3px] flex">
            <span className="text-[#e8ffff]">MACD modif 1</span>
            <span className="ml-[20px] text-[#ff0000]">1.30</span>
            <span className="ml-[10px] text-[#ffff00]">11.07</span>
            <span className="ml-[14px] text-[#3a3a3a]">-9.78</span>
            <span className="ml-[11px] text-[#808000]">0.00</span>
          </div>
        </div>

        <div className="relative w-[69px] shrink-0 border-l border-white">
          {priceLabels.map((p) => (
            <React.Fragment key={p}>
              <div className="absolute left-0 w-[7px] h-px bg-white" style={{ top: py(p) - 89 }} />
              <AxisLabel y={py(p)}>{p}</AxisLabel>
            </React.Fragment>
          ))}
          {[735, 790.5, 900, 955].map((y, i) => (
            <React.Fragment key={y}>
              <div className="absolute left-0 w-[7px] h-px bg-white" style={{ top: y - 89 }} />
              <AxisLabel y={y}>{["80.00","40.00","-40.00","-80.00"][i]}</AxisLabel>
            </React.Fragment>
          ))}
          {[817, 873].map((y) => <div key={y} className="absolute left-0 w-[6px] h-px bg-white" style={{ top: y - 89 }} />)}

          <Tag top={347} bg="bg-[#6a6aff]">4322</Tag>
          <Tag top={424} bg="bg-[#0000ff]">4249</Tag>
          <Tag top={462} bg="bg-[#ffff00]">4213</Tag>
          <Tag top={851} bg="bg-[#333333]" lh={23}>-9.78</Tag>
          <Tag top={821} bg="bg-[#ffff00]">11.07</Tag>
          <Tag top={834} bg="bg-[#ff0000]">1.30</Tag>

          <div className="absolute -left-[1px] top-[8px] flex gap-px ml-[6px]"><MdiGlyphs /></div>
        </div>
      </div>

      {/* time axis */}
      <div className="relative h-[25px] shrink-0 bg-black border-t border-white flex pl-[14px] text-white text-[19.5px] leading-[24px]">
        <div className="absolute left-[17px] top-0 w-px h-[7px] bg-white" />
        {dates.map((d) => (
          <div key={d} className="relative w-[68px] shrink-0 pt-[2px]">
            <div className="absolute left-0 top-0 w-px h-[5px] bg-white" />
            <div className={`text-center ${d === "6/30" ? "w-[59px]" : "w-[53px]"}`}>{d}</div>
          </div>
        ))}
      </div>

      {/* scrollbar */}
      <div className="h-[23px] shrink-0 bg-[#ececec] flex items-center">
        <svg width="6" height="10" viewBox="0 0 6 10" className="ml-[8px] shrink-0"><path d="M6 0L0 5l6 5z" fill="#444" /></svg>
        <div className="ml-auto w-[18px] h-[21px] rounded-[2px] border border-[#9a9a9a] bg-[linear-gradient(90deg,#f4f4f4,#d8d8d8)] flex items-center justify-center gap-[2px]">
          <div className="w-px h-[9px] bg-[#555]" /><div className="w-px h-[9px] bg-[#555]" /><div className="w-px h-[9px] bg-[#555]" />
        </div>
        <svg width="6" height="10" viewBox="0 0 6 10" className="ml-[9px] mr-[10px] shrink-0"><path d="M0 0l6 5-6 5z" fill="#555" /></svg>
      </div>

      {/* tabs */}
      <div className="h-[18px] shrink-0 bg-[#f0f0f0] border-t border-black flex items-center text-[12px] text-[#111] whitespace-pre">
        <div className="w-[68px] h-full flex pl-[2px] shrink-0">
          {[<path key="a" d="M2 3v8M9 3L5 7l4 4z" />, <path key="b" d="M9 3L5 7l4 4z" />, <path key="c" d="M5 3l4 4-4 4z" />, <path key="d" d="M5 3l4 4-4 4zM11 3v8" />].map((p, i) => (
            <div key={i} className="w-[16.5px] h-full flex items-center justify-center border border-[#c8c8c8] bg-[#ececec]">
              <svg width="13" height="14" viewBox="0 0 13 14" fill="#888" stroke="#888">{p}</svg>
            </div>
          ))}
        </div>
        <div className="flex h-full items-stretch border-b border-black">
          {tabs.map((t) => {
            const act = t === "STOXX-FTSEMIB sito";
            return (
              <React.Fragment key={t}>
                <Lam />
                <div className={`px-[7.6px] leading-[16px] ${act ? "bg-white font-bold -mb-px tracking-[-0.35px]" : ""}`}>{t}</div>
              </React.Fragment>
            );
          })}
          <svg width="10" height="17" viewBox="0 0 10 17" className="shrink-0" fill="none" stroke="#000"><path d="M1 17L7 0" /></svg>
        </div>
      </div>

      {/* status bar */}
      <div className="h-[19px] shrink-0 bg-[#f0efee] flex items-center text-[14px] leading-[19px] font-['Noto_Sans',sans-serif] text-[#222] whitespace-pre">
        <div className="pl-[3px] w-[1091px] shrink-0">For Help, press F1</div>
        <div className="h-full shrink-0 w-[53px] pl-[5px] overflow-hidden">Acct:</div>
        <StatusCell w="w-[90px]">Open Psns:</StatusCell>
        <StatusCell w="w-[63px]">DT BP:</StatusCell>
        <StatusCell w="w-[87px]">Purch Pwr:</StatusCell>
        <StatusCell w="w-[94px]">Closed P/L:</StatusCell>
        <StatusCell w="w-[59px]">RT TE:</StatusCell>
        <StatusCell w="w-[84px]">Open P/L:</StatusCell>
        <StatusCell w="w-[88px]" cls="text-[#0a8a0a]">ORDER BAR</StatusCell>
        <StatusCell w="w-[69px]" cls="text-[#0a8a0a]">MACROS</StatusCell>
        <div className="h-full w-[18px] shrink-0 border-l border-[#d4d0cc] flex items-center justify-center">
          <div className="w-[10px] h-[10px] rounded-full bg-[radial-gradient(circle_at_35%_35%,#ff8080,#e00000_55%,#700000)] -mt-[3px]" />
        </div>
        <StatusCell w="w-[124px]">15/11/2023 11:19</StatusCell>
      </div>
      <div className="h-[2px] shrink-0 bg-[#22384c]" />
    </div>
  );
}
